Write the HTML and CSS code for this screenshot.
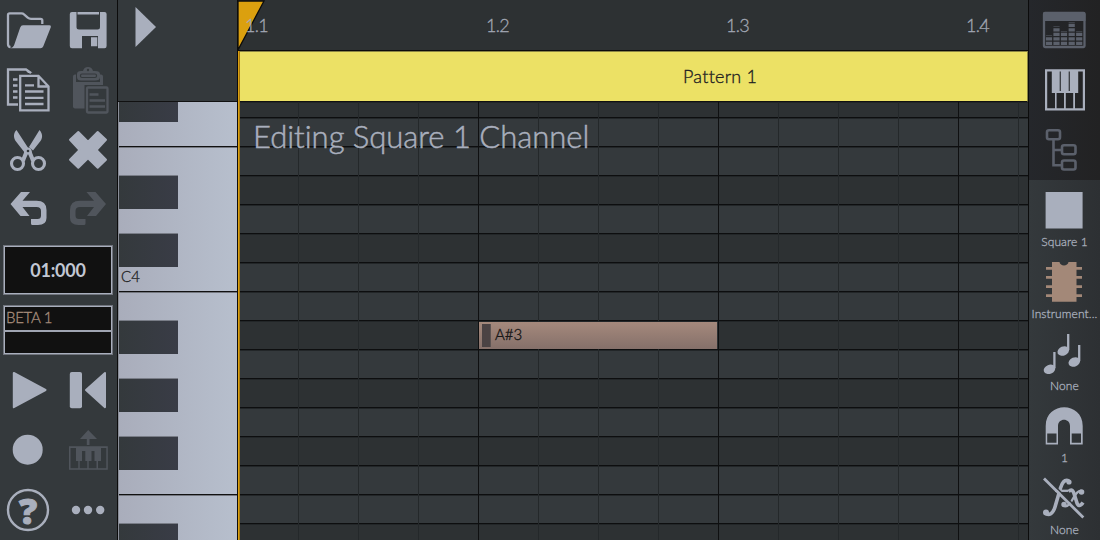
FILE: index.html
```html
<!DOCTYPE html>
<html lang="en">
<head>
<meta charset="utf-8">
<title>Piano roll</title>
<link rel="stylesheet" href="styles.css">
</head>
<body>
<div class="app">
  <aside class="tools">
    <div class="pad">
      <svg class="ic" viewBox="0 0 60 60"><path class="ln" d="M10.500 47C8.500 47 8 46 8 44V15Q8 13.300 9.700 13.300H21.500Q23 13.300 24 14.300L28 17.800Q29 18.800 31 18.800H40.500Q42.300 18.800 42.300 20.500V24"/><path class="fl" d="M23 25.300H49.500Q51.500 25.300 50.800 27.200L43.300 46.200Q42.500 48.200 40.500 48.200H10.500Q13 47.500 14 45.500L20.200 27.500Q21 25.300 23 25.300Z"/></svg>
      <svg class="ic" viewBox="0 0 60 60"><path class="fl" fill-rule="evenodd" d="M12 12H44.500Q46.600 12 46.600 14V46Q46.600 48.200 44.500 48.200H12Q9.800 48.200 9.800 46V14Q9.800 12 12 12ZM16.500 12V27Q16.500 29.500 19 29.500H37.500Q40 29.500 40 27V12ZM22 36V48.200H38V36Z"/><path class="fl" d="M17.500 12h21.500v2.500h-21.500zM31 37.300h6.300v9h-6.300z"/></svg>
      <svg class="ic" viewBox="0 0 60 60"><path class="ln" d="M18 44.500H8V9.500H26L31 13"/><path class="fl" d="M25 9L32.500 13H28z"/><path class="ln" d="M13 19.500h4.500M13 25.500h4.500M13 31.500h4.500M13 37.500h4.500M20.200 15.800H38.500L48.500 26.500V50.300H20.200ZM38.500 16V26.500H48M25 25.300h9M25 31.500h18.500M25 37.800h18.500M25 44h18.500"/></svg>
      <svg class="ic dim" viewBox="0 0 60 60"><rect class="fl" x="13" y="14.500" width="30" height="34" rx="2"/><path class="bgf" d="M16 12h24v10H16z"/><path class="fl" d="M17 14Q17 11 21 11H23Q24 7 28 7T33 11H35Q40 11 40 14V17Q40 20.500 35 20.500H21Q17 20.500 17 17Z"/><rect class="hole" x="20.500" y="14" width="16" height="3.500" rx="1.500"/><circle class="bgf" cx="28" cy="10" r="1.200"/><rect class="bgf" x="24.500" y="25" width="24" height="28"/><rect class="ln" x="27" y="27.500" width="20.500" height="25" rx="1"/><path class="ln" d="M29.500 34.500h9M29.500 40.500h15.500M29.500 46.500h15.500"/></svg>
      <svg class="ic" viewBox="0 0 60 60"><path class="fl" d="M16.500 10C13 13 13.500 18.500 16 21.500L25 33L29.500 30ZM39.500 10L29 27L33 30.500L40.500 21C43 17.500 42.500 13.500 39.500 10Z"/><path class="ln thick" d="M26.500 31C25.500 36 23.500 38 23 41M29.500 31C30.500 36 32.500 38 33 41"/><circle class="fl" cx="28" cy="31" r="3.500"/><circle class="bgf" cx="28" cy="31" r="1.300"/><circle class="ln ring" cx="17.500" cy="43.500" r="6"/><circle class="ln ring" cx="38.500" cy="43.500" r="6"/></svg>
      <svg class="ic" viewBox="0 0 60 60"><path class="fl rj" d="M18.300 12L28 21.700L37.700 12L46 19.800L36.500 30L46 39.800L37.700 47.700L28 38.300L18.300 47.700L10 39.800L19.500 30L10 19.800Z"/></svg>
      <svg class="ic" viewBox="0 0 60 60"><path id="undo" class="fl" d="M10.500 24L21 12H30L22.500 20.800H36.500Q46.500 20.800 46.500 30V38Q46.500 45 38 45H32.500Q31 45 31 43.500V39H37.500Q41 39 41 35.500V31Q41 27 36.500 27H22.500L29.500 36H20.500Z"/></svg>
      <svg class="ic dim" viewBox="0 0 60 60"><use href="#undo" transform="translate(56.500 0) scale(-1 1)"/></svg>
    </div>
    <div class="readouts">
      <div class="box time">01:000</div>
      <div class="box beta"><div class="line">BETA 1</div></div>
    </div>
    <div class="pad">
      <svg class="ic" viewBox="0 0 60 60"><path class="fl rj" d="M13.800 13L45.500 30L13.800 47.200Z"/></svg>
      <svg class="ic" viewBox="0 0 60 60"><rect class="fl" x="9.800" y="12" width="12.200" height="36.300" rx="2"/><path class="fl rj" d="M45 13L26 30L45 47.200Z"/></svg>
      <svg class="ic" viewBox="0 0 60 60"><circle class="fl" cx="27.700" cy="29.700" r="15"/></svg>
      <svg class="ic dim" viewBox="0 0 60 60"><path class="fl" d="M28.200 10L20 19H26.800V25H29.500V19H37Z"/><path class="fl" fill-rule="evenodd" d="M9 26.200H47.800V49.800H9ZM10.500 28V48.200H18.300V41H16V28ZM19.700 41V48.200H27.300V41H25.300V31H22V41ZM28.700 41V48.200H36.500V41H34.500V31H31.500V41ZM38 41V48.200H46.300V28H41V41Z"/></svg>
      <svg class="ic" viewBox="0 0 60 60"><circle class="ln ring2" cx="28" cy="30" r="20"/><text class="q" x="28" y="43.500" text-anchor="middle">?</text></svg>
      <svg class="ic" viewBox="0 0 60 60"><circle class="fl" cx="16" cy="30" r="4.200"/><circle class="fl" cx="28" cy="30" r="4.200"/><circle class="fl" cx="40.200" cy="30" r="4.200"/></svg>
    </div>
  </aside>

  <section class="piano">
    <div class="corner"><svg class="mark" viewBox="0 0 119 100"><path class="fl" d="M17.500 7L38 27L17.500 47Z"/></svg></div>
    <div class="keys">
      <div class="row part"><i class="bk"></i></div>
      <div class="row ruled"></div>
      <div class="row"></div>
      <div class="row"><i class="bk"></i></div>
      <div class="row"></div>
      <div class="row"><i class="bk"></i></div>
      <div class="row ruled"><span class="key">C4</span></div>
      <div class="row"></div>
      <div class="row"><i class="bk"></i></div>
      <div class="row"></div>
      <div class="row"><i class="bk"></i></div>
      <div class="row"></div>
      <div class="row"><i class="bk"></i></div>
      <div class="row ruled"></div>
      <div class="row"></div>
      <div class="row"><i class="bk"></i></div>
    </div>
  </section>

  <main class="roll">
    <div class="ruler">
      <svg class="head" viewBox="0 0 28 51"><path d="M0 1H26L0 50Z"/></svg>
      <span class="t">1.1</span><span class="t">1.2</span><span class="t">1.3</span><span class="t">1.4</span>
    </div>
    <div class="pattern"><span>Pattern 1</span></div>
    <div class="grid">
      <div class="r part d"></div><div class="r"></div><div class="r"></div><div class="r d"></div><div class="r"></div><div class="r d"></div><div class="r"></div><div class="r"></div>
      <div class="r d"><div class="note"><i></i><span>A#3</span></div></div>
      <div class="r"></div><div class="r d"></div><div class="r"></div><div class="r d"></div><div class="r"></div><div class="r"></div><div class="r d"></div>
      <div class="caption">Editing Square 1 Channel</div>
    </div>
    <div class="playline"></div>
  </main>

  <aside class="side">
    <div class="views">
      <svg class="ic w dimv" viewBox="0 0 72 60"><rect class="ln" x="16" y="13" width="40.500" height="34" rx="1"/><path class="fl" d="M15 14Q15 12 17 12H55.500Q57.500 12 57.500 14V21H15z"/><path class="bars" d="M21 45V35.500M28.500 45V26.500M36 45V31M43.700 45V22M51.200 45V31"/></svg>
      <svg class="ic w" viewBox="0 0 72 60"><path class="fl" fill-rule="evenodd" d="M17 9.200H57V50.500H17ZM19.200 11.500V48.200H27V33H23.800V11.500ZM28.600 33V48.200H36V33ZM37.800 33V48.200H45.200V33ZM47 33V48.200H54.800V11.500H50.200V33ZM31.700 11.500V31H32.800V11.500ZM40.700 11.500V31H41.800V11.500Z"/></svg>
      <svg class="ic w dimv" viewBox="0 0 72 60"><g class="ln tree"><rect x="19" y="10.300" width="13" height="9" rx="2"/><rect x="34" y="25.300" width="13.500" height="9" rx="2"/><rect x="34" y="40.500" width="13.500" height="9" rx="2"/><path d="M25.500 19.500V45.300H34M25.500 30H34"/></g></svg>
    </div>
    <div class="opts">
      <div class="opt"><svg class="ic w" viewBox="0 0 72 60"><path class="fl" d="M17.600 12H54.600V48.500H17.600z"/></svg><span>Square 1</span></div>
      <div class="opt"><svg class="ic w" viewBox="0 0 72 60"><path class="chip" d="M24 10H31.500C32 14.500 40 14.500 40.500 10H48.500V15H54V17.700H48.500V24H54V26.700H48.500V33.300H54V36H48.500V42.300H54V45H48.500V49.700H24V45H18V42.300H24V36H18V33.300H24V26.700H18V24H24V17.700H18V15H24Z"/></svg><span>Instrument...</span></div>
      <div class="opt"><svg class="ic w" viewBox="0 0 72 60"><g class="fl"><ellipse cx="35.300" cy="27" rx="6" ry="4.500" transform="rotate(-22 35.300 27)"/><ellipse cx="46.300" cy="38" rx="6" ry="4.500" transform="rotate(-22 46.300 38)"/><ellipse cx="21.500" cy="45.300" rx="6" ry="4.500" transform="rotate(-22 21.500 45.300)"/></g><path class="ln" d="M40.200 10V26M51.200 21V37M26.400 28V44"/></svg><span>None</span></div>
      <div class="opt"><svg class="ic w" viewBox="0 0 72 60"><path class="fl" fill-rule="evenodd" d="M17.700 48.500V30C17.700 5 54.700 5 54.700 30V48.500H42V30C42 21.500 30 21.500 30 30V48.500ZM19.200 37.500V46.700H28.500V37.500ZM43.700 37.500V46.700H53V37.500Z"/></svg><span>1</span></div>
      <div class="opt"><svg class="ic w" viewBox="0 0 72 60"><path class="ln f1" d="M41 13C36.500 10.500 34 15 32.500 20L27 39C25 45.500 21 48.500 17 45"/><path class="ln" d="M27 22.800H40"/><circle class="fl" cx="18" cy="44.500" r="3"/><circle class="fl" cx="41" cy="14" r="2.600"/><path class="ln f1" d="M40.500 23.500C44 20.500 45.500 23 46.500 27L48.500 33.500C49.500 38 52 39 55 34.500"/><path class="ln" d="M54.500 23.500C49 20 45 32 41.500 36Q38 40 34.500 37"/><circle class="fl" cx="53.500" cy="24" r="2.800"/><circle class="fl" cx="36" cy="36.500" r="2.700"/><path class="gap" d="M17.500 9L57.500 48.500"/><path class="ln slash" d="M16 10.500L55.300 49.500"/></svg><span>None</span></div>
    </div>
  </aside>
</div>
</body>
</html>
```
FILE: styles.css
```css
* { box-sizing: border-box; }
body { margin: 0; background: #111; font-family: Lato, "Open Sans", sans-serif; color: #a9afbd; font-variant-ligatures: none; }
.app { display: flex; width: 1100px; height: 540px; overflow: hidden; }

.ic { display: block; width: 60px; height: 60px; color: #a9afbd; --bg: #34393c; overflow: visible; }
.ic.w { width: 72px; }
.ic.dim { color: #50555c; }
.ic.dimv { color: #5b606b; }
.fl { fill: currentColor; }
.ln { fill: none; stroke: currentColor; stroke-width: 2.3; }
.bgf { fill: var(--bg); }
.hole { fill: none; stroke: #34393c; stroke-width: 1.2; }
.thick { stroke-width: 4; }
.ring { stroke-width: 3.1; }
.ring2 { stroke-width: 2.4; }
.rj { stroke: currentColor; stroke-width: 2; stroke-linejoin: round; }
.q { font: 800 36px "Open Sans", sans-serif; fill: currentColor; stroke: currentColor; stroke-width: 1; }
.bars { fill: none; stroke: currentColor; stroke-width: 6.2; stroke-dasharray: 3.2 1.3; }
.tree { stroke-width: 2.6; }
.chip { fill: #a38878; }
.gap { fill: none; stroke: #31363a; stroke-width: 1.5; }
.f1 { stroke-width: 3.6; }
.slash { stroke-width: 2.8; }

.tools { width: 118px; flex: none; background: #34393c; border-right: 1px solid #0c0c0c; }
.pad { display: grid; grid-template-columns: 60px 60px; width: 117px; }
.readouts { height: 120px; padding: 5px 4px 5px 3px; display: flex; flex-direction: column; gap: 10px; }
.box { height: 50px; background: #111; border: 1px solid #71757e; box-shadow: inset 0 0 0 1px #a9afbd; }
.time { font-size: 18px; font-weight: 700; line-height: 49px; text-align: center; letter-spacing: -0.2px; color: #c2c7d3; }
.beta .line { height: 26px; border-bottom: 2px solid #a9afbd; font-size: 15px; font-weight: 300; -webkit-text-stroke: 0.3px currentColor; line-height: 23px; padding-left: 2px; letter-spacing: -0.3px; }
.beta .line { color: #a98f7d; border-bottom-color: #a0a5b2; }

.piano { width: 120px; flex: none; border-right: 1px solid #0c0c0c; }
.corner { height: 102px; background: #34393c; border-bottom: 1px solid #111; }
.mark { display: block; width: 119px; height: 100px; }
.keys { height: 438px; overflow: hidden; background: linear-gradient(90deg, #a9adbb, #b7bfcd); border-left: 1px solid #8a8e98; }
.row { height: 29px; position: relative; }
.row.part { height: 15px; }
.row.ruled { border-bottom: 2px solid #111; border-bottom: 1px solid #111; box-shadow: 0 1px 0 #74777f; height: 30px; margin-bottom: -1px; }
.bk { position: absolute; left: 0; top: 0; width: 59px; height: 34px; border-top: 1px solid #797d87; background: linear-gradient(90deg, #34393c, #393c46); z-index: 1; }
.row.part .bk { top: -14px; }
.key { display: block; padding-left: 2px; font-size: 15px; font-weight: 300; -webkit-text-stroke: 0.3px currentColor; line-height: 29px; color: #222; }

.roll { width: 790px; flex: none; position: relative; }
.ruler { height: 51px; background: #2d3133; border-bottom: 1px solid #0c0c0c; display: flex; padding-left: 7px; overflow: hidden; }
.t { flex: none; width: 240px; font-size: 18px; line-height: 50px; font-weight: 300; -webkit-text-stroke: 0.3px currentColor; letter-spacing: -0.7px; white-space: nowrap; color: #a3a8b5; position: relative; }
.t + .t { left: 1px; }
.head { position: absolute; left: 0; top: 0; width: 28px; height: 51px; fill: #dba00f; stroke: #0c0c0c; stroke-width: 1.3; }
.pattern { height: 51px; background: #ece165; border-top: 1px solid #8b8644; border-right: 1px solid #8b8644; border-bottom: 1px solid #111; padding-left: 445px; font-size: 18px; font-weight: 300; -webkit-text-stroke: 0.35px currentColor; line-height: 49px; color: #222; letter-spacing: 0.25px; }
.grid { height: 438px; overflow: hidden; position: relative; }
.r { height: 29px; background: #34393c; border-bottom: 1px solid #0d0e0f; border-top: 1px solid #222628; }
.r.d { background: #2d3133; }
.r.part { height: 16px; }
.grid::after { content: ""; position: absolute; inset: 0;
  background:
    repeating-linear-gradient(90deg, #0f1011 0 1px, transparent 1px 240px),
    repeating-linear-gradient(90deg, #24282a 0 1px, transparent 1px 60px); }
.note { position: relative; z-index: 2; margin-left: 241px; width: 238px; height: 27px; display: flex; align-items: center; gap: 4px; padding-left: 3px; background: linear-gradient(#a5897c, #85706a); font-size: 15px; font-weight: 300; -webkit-text-stroke: 0.35px currentColor; line-height: 25px; color: #171717; }
.note span { margin-top: -2px; }
.note i { width: 9px; height: 23px; background: #4b4344; border-right: 1px solid #5d5453; }
.caption { position: absolute; z-index: 3; left: 15px; top: 15px; font-size: 31px; line-height: 38px; font-weight: 300; letter-spacing: -0.02px; -webkit-text-stroke: 0.5px currentColor; white-space: nowrap; color: #a9afbd; }
.playline { position: absolute; left: 0; top: 51px; bottom: 0; width: 2px; background: linear-gradient(90deg, #dba00f 50%, #a87b10 50%); z-index: 4; }

.side { flex: none; width: 72px; border-left: 1px solid #0c0c0c; }
.views { height: 180px; background: linear-gradient(90deg, #25272b, #222223); }
.views .ic, .opt .ic { margin-left: -1px; }
.opts { background: linear-gradient(90deg, #34393c, #2d3033); }
.opt { height: 72px; display: flex; flex-direction: column; align-items: center; font-size: 12px; font-weight: 300; -webkit-text-stroke: 0.3px currentColor; letter-spacing: 0.1px; line-height: 4px; white-space: nowrap; }
```
